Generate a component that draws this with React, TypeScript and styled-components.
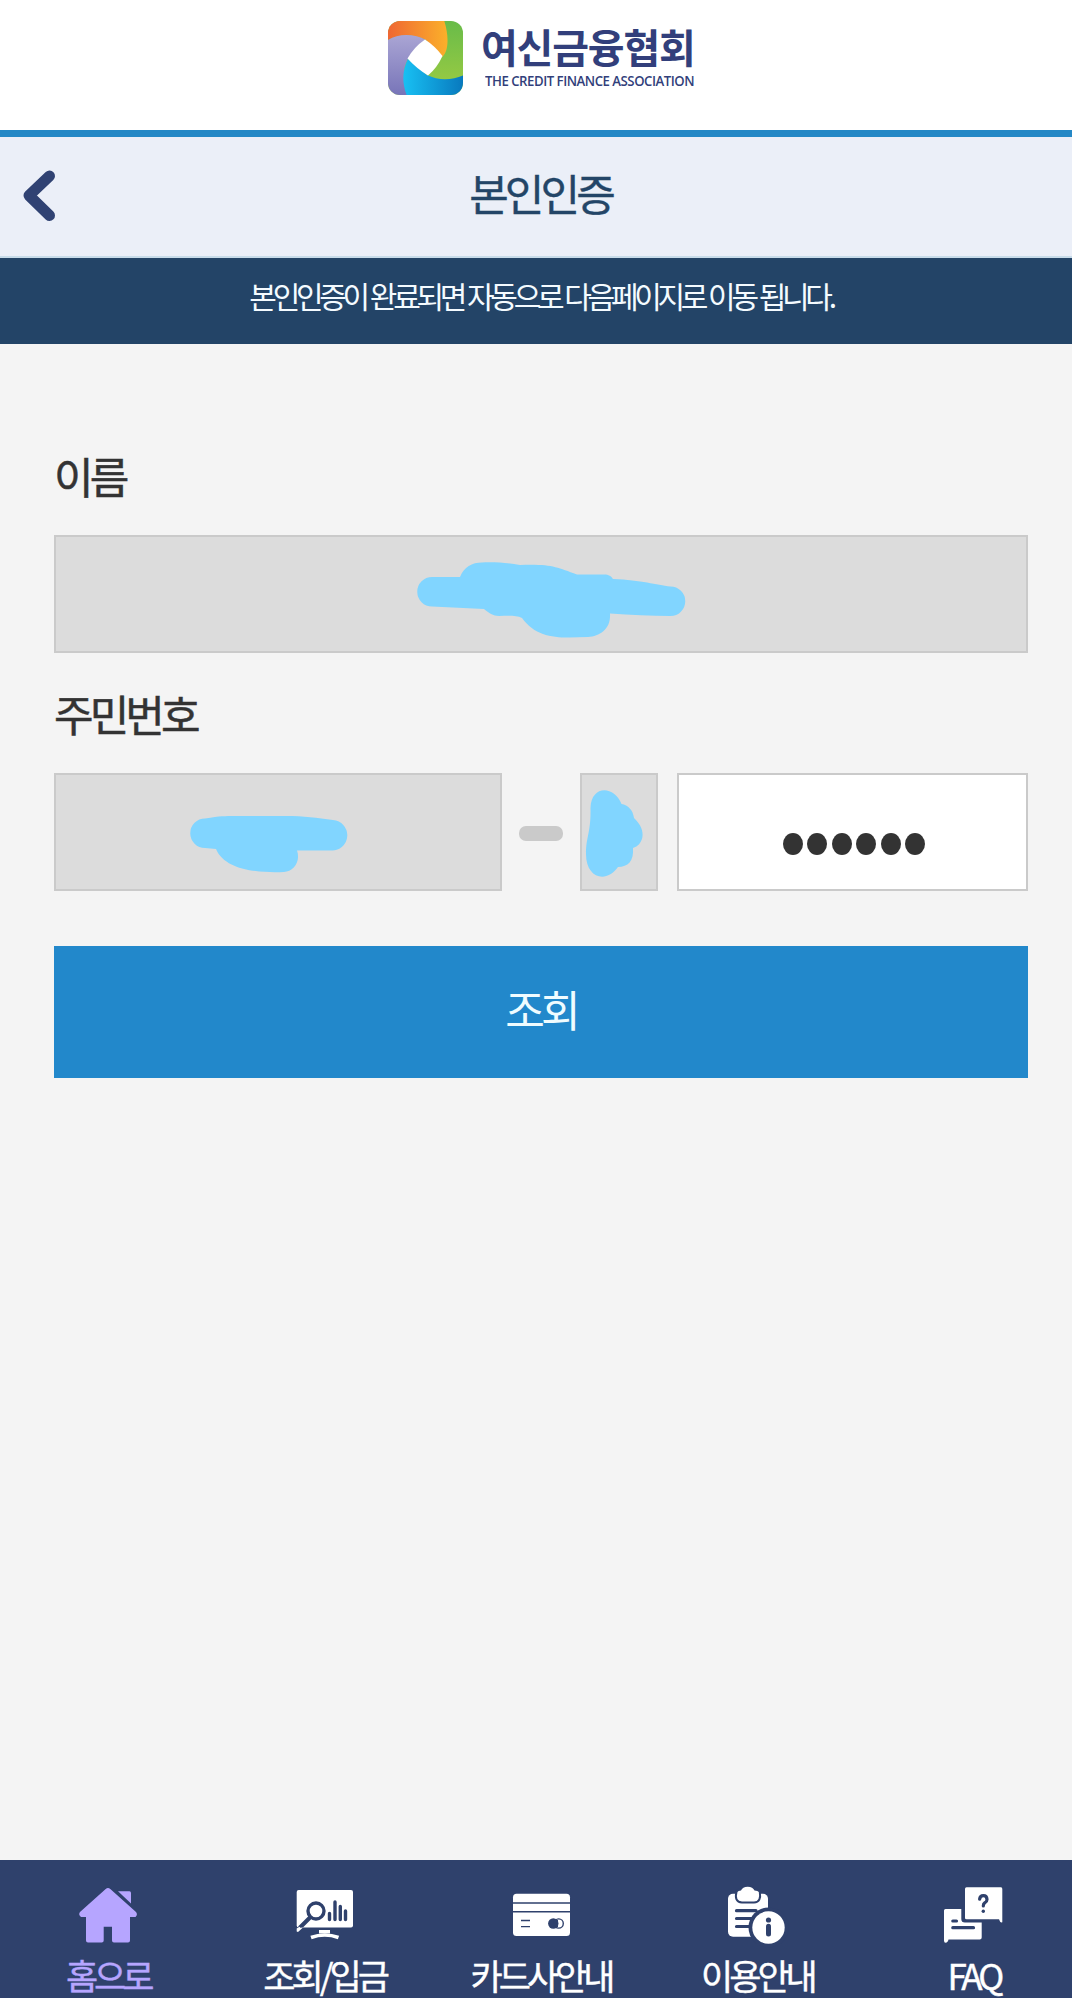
import React from "react";
import styled, { createGlobalStyle } from "styled-components";

const GlobalStyle = createGlobalStyle`
  * { box-sizing: border-box; }
  html, body { margin: 0; padding: 0; overflow: hidden; background: #f4f4f4; }
  body { font-family: "Noto Sans CJK KR", "Noto Sans", sans-serif; }
`;

const Viewport = styled.div`
  width: 1072px;
  height: 1998px;
  overflow: hidden;
`;

const Page = styled.div`
  width: 1082px;
  height: 1998px;
  display: flex;
  flex-direction: column;
  background: #f4f4f4;
`;

const BrandHeader = styled.header`
  flex: none;
  height: 137px;
  padding: 20px 0 0 388px;
  display: flex;
  align-items: flex-start;
  background: #fff;
  border-bottom: 7px solid #2488c6;
`;

const BrandText = styled.div`
  margin-left: 18px;
  display: flex;
  flex-direction: column;
  color: #323f7b;
  white-space: nowrap;
`;

const BrandName = styled.span`
  margin-left: -1px;
  padding-top: 2px;
  font-size: 40px;
  line-height: 49px;
  font-weight: 700;
  letter-spacing: -1.2px;
`;

const BrandSub = styled.span`
  margin-left: 3px;
  font-family: "Open Sans", "Noto Sans", sans-serif;
  font-size: 15px;
  line-height: 18px;
  font-weight: 600;
  letter-spacing: -0.55px;
  transform: scaleX(0.88);
  transform-origin: left;
`;

const TitleBar = styled.div`
  flex: none;
  height: 121px;
  display: grid;
  grid-template-columns: 80px 1fr 80px;
  align-items: center;
  background: #ebeff8;
  border-bottom: 2px solid #c8dcea;
`;

const BackButton = styled.button`
  width: 80px;
  height: 119px;
  padding: 0 0 2px;
  border: 0;
  background: none;
  display: flex;
  align-items: center;
`;

const Title = styled.h1`
  margin: 0;
  padding: 0 1px 9px 0;
  text-align: center;
  font-size: 43px;
  line-height: 60px;
  font-weight: 400;
  letter-spacing: -3.9px;
  color: #234567;
  -webkit-text-stroke: 0.4px #234567;
`;

const Notice = styled.p`
  flex: none;
  height: 86px;
  margin: 0;
  text-align: center;
  font-size: 30px;
  line-height: 75px;
  font-weight: 400;
  letter-spacing: -4.3px;
  word-spacing: 1.6px;
  color: #f4fbff;
  background: #234467;
`;

const Form = styled.main`
  flex: 1;
  display: flex;
  flex-direction: column;
  padding: 103px 54px 0;
`;

const Label = styled.label`
  height: 88px;
  font-size: 43px;
  line-height: 56px;
  font-weight: 400;
  letter-spacing: -3.9px;
  color: #333;
  -webkit-text-stroke: 0.5px #333;
`;

const Field = styled.div<{ $width?: number; $editable?: boolean }>`
  flex: none;
  width: ${(p) => (p.$width ? `${p.$width}px` : "100%")};
  height: 118px;
  border: 2px solid #cacaca;
  background: ${(p) => (p.$editable ? "#fff" : "#dcdcdc")};
  display: flex;
  align-items: center;
  justify-content: center;
`;

const Scribble = styled.svg`
  flex: none;
  display: block;
  width: 100%;
  height: 114px;
  fill: #81d5ff;
`;

const NumberLabel = styled(Label)`
  margin-top: 32px;
`;

const NumberRow = styled.div`
  display: flex;
  align-items: center;
`;

const Dash = styled.span`
  width: 44px;
  height: 15px;
  margin: 3px 17px 0;
  border-radius: 7px;
  background: #cacaca;
`;

const MaskedInput = styled(Field)`
  margin-left: 19px;
  gap: 4.4px;
  padding: 24px 0 0 3px;
`;

const Dot = styled.span`
  width: 20px;
  height: 22px;
  border-radius: 50%;
  background: #333;
`;

const Submit = styled.button`
  flex: none;
  height: 132px;
  margin-top: 55px;
  padding: 0 0 9px;
  border: 0;
  background: #2288cb;
  color: #f0fcff;
  font-family: inherit;
  font-size: 43px;
  line-height: 60px;
  font-weight: 400;
  letter-spacing: -3.9px;
`;

const TabBar = styled.nav`
  flex: none;
  height: 138px;
  display: grid;
  grid-template-columns: repeat(5, 1fr);
  background: #2f416c;
`;

const Tab = styled.a<{ $active?: boolean }>`
  display: flex;
  flex-direction: column;
  align-items: center;
  padding-top: 24px;
  color: ${(p) => (p.$active ? "#b6a5ff" : "#fff")};
`;

const TabIcon = styled.svg`
  flex: none;
  width: 60px;
  height: 60px;
  overflow: visible;
`;

const TabLabel = styled.span`
  margin-top: 8px;
  font-size: 35px;
  line-height: 46px;
  letter-spacing: -4px;
  white-space: nowrap;
  -webkit-text-stroke: 0.4px currentColor;
`;

const navy = "#2f416c";

const BrandMark = () => (
  <svg width="76" height="76" viewBox="0 0 76 76">
    <defs>
      <clipPath id="tile"><rect x="0" y="1" width="75" height="74" rx="12" /></clipPath>
      <linearGradient id="orange"><stop stopColor="#ef6733" /><stop offset="1" stopColor="#fbb02a" /></linearGradient>
      <linearGradient id="green" x2="0" y2="1"><stop stopColor="#68bb49" /><stop offset="1" stopColor="#a0cd42" /></linearGradient>
      <linearGradient id="blue"><stop stopColor="#18c0f3" /><stop offset="1" stopColor="#0878bd" /></linearGradient>
      <linearGradient id="violet" x2="0" y2="1"><stop stopColor="#aaa5d4" /><stop offset="1" stopColor="#7774b8" /></linearGradient>
    </defs>
    <g clipPath="url(#tile)">
      <rect width="76" height="76" fill="url(#green)" />
      <path d="M0 0H56C61 15 61 32 54 37L38 20C26 14 11 14 0 20Z" fill="url(#orange)" />
      <path d="M0 20C11 13 27 14 38 20L20 39C14 49 15 63 20 76H0Z" fill="url(#violet)" />
      <path d="M20 39L39 55C51 61 65 60 76 55V76H19C13 61 15 49 20 39Z" fill="url(#blue)" />
      <path d="M37 19.5Q47 26 54.500 36Q49 48 40 55.500Q28 48 19.500 38.500Q26 27 37 19.500Z" fill="#fff" />
    </g>
  </svg>
);

const HomeIcon = () => (
  <TabIcon viewBox="0 0 60 60" fill="currentColor">
    <path d="M27.7 5Q30 2.8 32.3 5L58 28Q60 30.8 57.5 33H52V56.5Q52 58.5 50 58.5H36Q34 58.5 34 56.5V42.7H25.7V56.5Q25.7 58.5 23.7 58.5H10Q8 58.5 8 56.5V33H3Q0 30.8 2 28Z" />
    <path d="M40 7.3H51.5Q53 7.3 53 9V19.5Z" />
  </TabIcon>
);

const SearchIcon = () => (
  <TabIcon viewBox="0 0 60 60" fill="none" strokeLinecap="round">
    <rect x="1.7" y="6" width="56.3" height="37.4" rx="2" fill="#fff" />
    <circle cx="21" cy="27" r="8" stroke={navy} strokeWidth="3.4" />
    <path d="M15 33.5L5 43.5" stroke={navy} strokeWidth="4" />
    <path d="M1.7 44.5L4.5 42.7L5.3 43.8L8 43.5L3 48L1.7 47.5Z" fill="#fff" />
    <path d="M34.5 29.5V35.5M40 18V35.5M45.3 22.5V35.5M50.5 27V35.5" stroke={navy} strokeWidth="3.4" />
    <path d="M24 46H35V49.5H24Z" fill="#fff" />
    <path d="M16 53.5Q29.7 48.5 43.500 53.5" stroke="#fff" strokeWidth="3.6" strokeLinecap="butt" />
  </TabIcon>
);

const CardIcon = () => (
  <TabIcon viewBox="0 0 60 60" fill="none" stroke={navy}>
    <rect x="2" y="9.7" width="57" height="42.3" rx="3.5" fill="#fff" stroke="none" />
    <path d="M2 19H59M2 27.7H59" strokeWidth="1.5" />
    <path d="M10 36.5H19M10 42.6H19" strokeWidth="1.4" />
    <circle cx="42.3" cy="39.5" r="5.2" fill={navy} stroke="none" />
    <circle cx="47.7" cy="39.5" r="4.6" strokeWidth="1.4" />
    <path d="M45 36V43" strokeWidth="4" />
  </TabIcon>
);

const GuideIcon = () => (
  <TabIcon viewBox="0 0 60 60" fill="#fff" strokeLinecap="round">
    <rect x="1" y="9.7" width="40" height="43" rx="5" />
    <path
      d="M10.5 8Q11 6.5 14 6.5Q15.5 2.7 20.7 2.7T27.5 6.5Q31 6.5 31.8 8Q33.5 17.5 27 17.5H15Q8 17 10.5 8Z"
      stroke={navy}
      strokeWidth="4"
      paintOrder="stroke"
    />
    <path d="M9.5 26.7H29M9.5 34.5H25M9.5 42.5H22" stroke={navy} strokeWidth="3.2" />
    <circle cx="41.5" cy="43.5" r="20" fill={navy} />
    <circle cx="41.5" cy="43.5" r="16.2" />
    <circle cx="41.5" cy="36" r="2.6" fill={navy} />
    <path d="M41.5 42.3V50" stroke={navy} strokeWidth="5" />
  </TabIcon>
);

const FaqIcon = () => (
  <TabIcon viewBox="0 0 60 60" fill="#fff" strokeLinecap="round">
    <path d="M1.5 25H17.3V35Q17.3 38.5 21 38.5H37.7V53.5Q37.7 55.5 35.7 55.5H4.5Q4 58.5 1.5 58.7Q0 58.7 0 56.5V26.5Q0 25 1.5 25Z" />
    <path d="M22.5 3.3H57Q58.3 3.3 58.3 5V38.3Q56 39 55 35.3H22.5Q21 35.3 21 34V5Q21 3.3 22.5 3.3Z" />
    <path d="M8.8 37H12.5M8.8 43.7H29.5" fill="none" stroke={navy} strokeWidth="3.2" />
    <path d="M35.6 15.2Q36 11.7 39.4 11.7T43 15.4Q43 17.5 40.7 18.9Q39.3 19.8 39.3 22" fill="none" stroke={navy} strokeWidth="3.2" />
    <circle cx="39.3" cy="27.2" r="1.7" fill={navy} />
  </TabIcon>
);

const tabs = [
  { label: "홈으로", Icon: HomeIcon, active: true },
  { label: "조회/입금", Icon: SearchIcon },
  { label: "카드사안내", Icon: CardIcon },
  { label: "이용안내", Icon: GuideIcon },
  { label: "FAQ", Icon: FaqIcon },
];

export default function App() {
  return (
    <Viewport>
      <GlobalStyle />
      <Page>
        <BrandHeader>
          <BrandMark />
          <BrandText>
            <BrandName>여신금융협회</BrandName>
            <BrandSub>THE CREDIT FINANCE ASSOCIATION</BrandSub>
          </BrandText>
        </BrandHeader>
        <TitleBar>
          <BackButton aria-label="뒤로">
            <svg width="80" height="60" viewBox="0 0 80 60" fill="none">
              <path d="M49.5 10L29 29.5L49.5 49.5" stroke="#304273" strokeWidth="11" strokeLinecap="round" strokeLinejoin="round" />
            </svg>
          </BackButton>
          <Title>본인인증</Title>
        </TitleBar>
        <Notice>본인인증이 완료되면 자동으로 다음페이지로 이동 됩니다.</Notice>
        <Form>
          <Label>이름</Label>
          <Field>
            <Scribble viewBox="0 0 970 114">
              <path d="M376 40H404C408 30 416 25.500 426 25.500C440 25 452 26 464 28C496 27 500 30 521 37.500H548C553 37.500 555 39 557 42C586 43 600 48 614.500 49.500A14.600 14.600 0 0 1 614.500 79C595 79 575 78 554 76.500C555 92 544 99 532 100C505 101 482 103 466 81C460 78 451 79 443 79C437 79 433 76 428 72L376 69.500A14.700 14.700 0 0 1 376 40Z" />
            </Scribble>
          </Field>
          <NumberLabel>주민번호</NumberLabel>
          <NumberRow>
            <Field $width={448}>
              <Scribble viewBox="0 0 444 114">
                <path d="M149 43.500C165 41 168 41 180 41H230C248 41 261 43 277 45A14.700 14.700 0 0 1 275 75.500H241C245 87 237 97 228 97C205 98 169 96 160 74L149 73A14.700 14.700 0 0 1 149 43.500Z" />
              </Scribble>
            </Field>
            <Dash />
            <Field $width={78}>
              <Scribble viewBox="0 0 74 114">
                <path d="M8.500 33C9 10 32 10 39.500 29C46 30 51 35 52 43C66 56 61 70 51 73C52 86 46 92 36 92C24 109 4 103 4 79C4 61 9 58 8.500 33Z" />
              </Scribble>
            </Field>
            <MaskedInput $width={351} $editable>
              {Array.from({ length: 6 }, (_, i) => (
                <Dot key={i} />
              ))}
            </MaskedInput>
          </NumberRow>
          <Submit>조회</Submit>
        </Form>
        <TabBar>
          {tabs.map(({ label, Icon, active }) => (
            <Tab key={label} $active={active}>
              <Icon />
              <TabLabel>{label}</TabLabel>
            </Tab>
          ))}
        </TabBar>
      </Page>
    </Viewport>
  );
}
